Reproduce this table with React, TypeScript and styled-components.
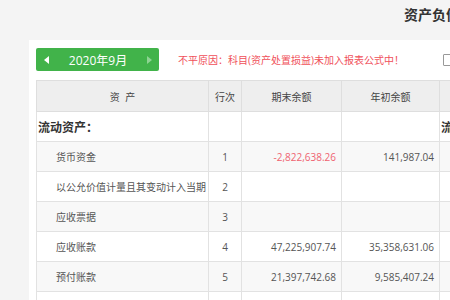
import React from 'react';
import styled, { createGlobalStyle } from 'styled-components';

const GlobalStyle = createGlobalStyle`
  html, body {
    margin: 0;
    padding: 0;
    background: #f4f4f4;
    overflow: hidden;
  }
  body {
    font-family: 'Open Sans', 'Noto Sans CJK SC', sans-serif;
  }
`;

const Page = styled.div`
  width: 880px;
  padding-left: 29px;
`;

const TitleBar = styled.div`
  width: 820px;
  height: 40px;
  display: flex;
  align-items: flex-start;
  justify-content: center;
`;

const Title = styled.h1`
  margin: 4px 0 0;
  font-size: 14px;
  line-height: 20px;
  font-weight: bold;
  color: #333;
  font-family: 'Noto Sans CJK SC', sans-serif;
`;

const Panel = styled.div`
  width: 806px;
  background: #fff;
  padding: 8px 7px 20px;
`;

const Toolbar = styled.div`
  display: grid;
  grid-template-columns: 403px 403px;
  height: 23px;
  margin-bottom: 9px;
`;

const ToolLeft = styled.div`
  display: flex;
  align-items: center;
  gap: 19px;
`;

const ToolRight = styled.div`
  display: flex;
  align-items: center;
  padding-left: 4px;
`;

const MonthButton = styled.div`
  width: 123px;
  height: 23px;
  background: #41b34a;
  border-radius: 2px;
  display: flex;
  align-items: center;
  justify-content: space-between;
  padding: 0 7px 0 8px;
  box-sizing: border-box;
  color: #fff;
  font-size: 12px;
`;

const Arrow = styled.span<{ dir: 'left' | 'right'; muted?: boolean }>`
  width: 0;
  height: 0;
  border-top: 4px solid transparent;
  border-bottom: 4px solid transparent;
  ${(p) =>
    p.dir === 'left'
      ? `border-right: 5px solid ${p.muted ? '#8ed493' : '#fff'};`
      : `border-left: 5px solid ${p.muted ? '#8ed493' : '#fff'};`}
`;

const Warning = styled.span`
  font-size: 10px;
  color: #f0505a;
  white-space: nowrap;
`;

const CheckBox = styled.span`
  width: 10px;
  height: 10px;
  border: 1px solid #999;
  border-radius: 1px;
  background: #fff;
  flex-shrink: 0;
`;

const Table = styled.table`
  border-collapse: collapse;
  table-layout: fixed;
  width: 806px;
  font-size: 10px;
  color: #555;
`;

const Row = styled.tr<{ shade?: boolean }>`
  height: 30px;
  background: ${(p) => (p.shade ? '#f8f8f8' : '#fff')};
`;

const HeadRow = styled.tr`
  height: 31px;
  background: #eeeeee;
`;

const Th = styled.th<{ spaced?: boolean }>`
  border: 1px solid #dedede;
  font-weight: normal;
  color: #444;
  text-align: center;
  padding: 0;
  ${(p) => (p.spaced ? 'word-spacing: 3px;' : '')}
`;

const NameCell = styled.td<{ category?: boolean }>`
  border: 1px solid #e2e2e2;
  padding: 0 0 0 ${(p) => (p.category ? '1px' : '19px')};
  white-space: nowrap;
  overflow: hidden;
  ${(p) => (p.category ? 'font-weight: bold; font-size: 12px; color: #333;' : '')}
`;

const NoCell = styled.td`
  border: 1px solid #e2e2e2;
  text-align: center;
  padding: 0;
`;

const NumCell = styled.td<{ negative?: boolean }>`
  border: 1px solid #e2e2e2;
  text-align: right;
  padding: 0 5px 0 0;
  white-space: nowrap;
  color: ${(p) => (p.negative ? '#ef6370' : '#555')};
`;

type Side = { name: string; no?: string; end?: string; begin?: string; category?: boolean };

const assets: Side[] = [
  { name: '流动资产：', category: true },
  { name: '货币资金', no: '1', end: '-2,822,638.26', begin: '141,987.04' },
  { name: '以公允价值计量且其变动计入当期', no: '2' },
  { name: '应收票据', no: '3' },
  { name: '应收账款', no: '4', end: '47,225,907.74', begin: '35,358,631.06' },
  { name: '预付账款', no: '5', end: '21,397,742.68', begin: '9,585,407.24' },
  { name: '应收利息', no: '6' },
];

const liabilities: Side[] = [
  { name: '流动负债：', category: true },
  { name: '短期借款', no: '32' },
  { name: '交易性金融负债', no: '33' },
  { name: '应付票据', no: '34' },
  { name: '应付账款', no: '35' },
  { name: '预收账款', no: '36' },
  { name: '应付职工薪酬', no: '37' },
];

const Cells: React.FC<{ item: Side }> = ({ item }) => (
  <>
    <NameCell category={item.category}>{item.name}</NameCell>
    <NoCell>{item.no}</NoCell>
    <NumCell negative={item.end?.startsWith('-')}>{item.end}</NumCell>
    <NumCell negative={item.begin?.startsWith('-')}>{item.begin}</NumCell>
  </>
);

export default function App() {
  return (
    <Page>
      <GlobalStyle />
      <TitleBar>
        <Title>资产负债表</Title>
      </TitleBar>
      <Panel>
        <Toolbar>
          <ToolLeft>
            <MonthButton>
              <Arrow dir="left" />
              <span>2020年9月</span>
              <Arrow dir="right" muted />
            </MonthButton>
            <Warning>不平原因：科目(资产处置损益)未加入报表公式中！</Warning>
          </ToolLeft>
          <ToolRight>
            <CheckBox />
          </ToolRight>
        </Toolbar>
        <Table>
          <colgroup>
            <col style={{ width: 172 }} />
            <col style={{ width: 33 }} />
            <col style={{ width: 100 }} />
            <col style={{ width: 98 }} />
            <col style={{ width: 172 }} />
            <col style={{ width: 33 }} />
            <col style={{ width: 100 }} />
            <col style={{ width: 98 }} />
          </colgroup>
          <thead>
            <HeadRow>
              <Th spaced>资 产</Th>
              <Th>行次</Th>
              <Th>期末余额</Th>
              <Th>年初余额</Th>
              <Th>负债和所有者权益</Th>
              <Th>行次</Th>
              <Th>期末余额</Th>
              <Th>年初余额</Th>
            </HeadRow>
          </thead>
          <tbody>
            {assets.map((a, i) => (
              <Row key={a.name} shade={i % 2 === 1}>
                <Cells item={a} />
                <Cells item={liabilities[i]} />
              </Row>
            ))}
          </tbody>
        </Table>
      </Panel>
    </Page>
  );
}
